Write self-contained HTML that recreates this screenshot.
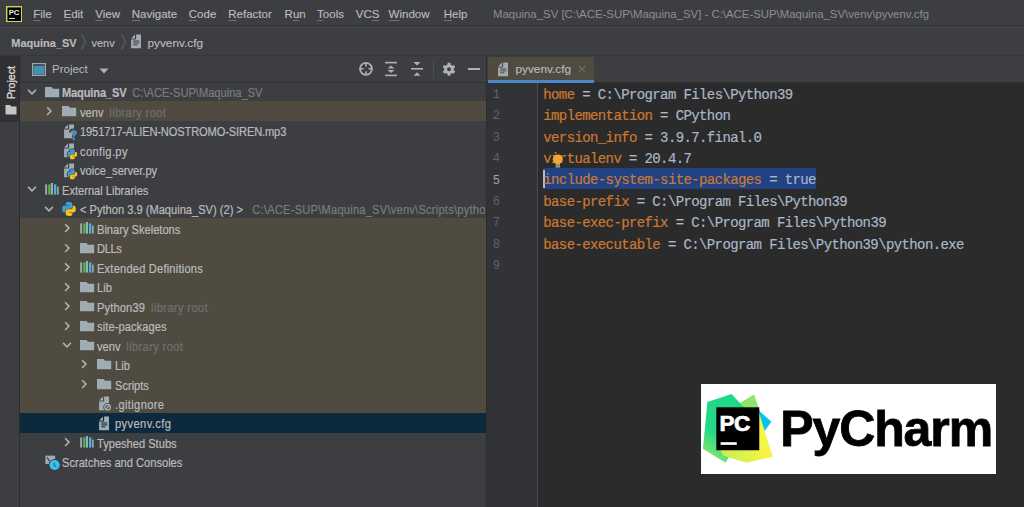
<!DOCTYPE html>
<html><head><meta charset="utf-8">
<style>
html,body{margin:0;padding:0;}
body{width:1024px;height:507px;overflow:hidden;position:relative;background:#3d3e42;font-family:"Liberation Sans",sans-serif;color:#bbbbbb;}
div,svg{position:absolute;}
.menubar{left:0;top:0;width:1024px;height:27px;background:#3d3e42;}
.mi{top:0;height:28px;line-height:28px;font-size:11.5px;color:#bbbbbb;white-space:nowrap;-webkit-text-stroke:0.15px currentColor;}
.title{left:493px;top:0;height:28px;line-height:28px;font-size:11.4px;color:#8e8e8e;white-space:nowrap;}
.hline{left:0;width:1024px;height:1px;}
.nav{left:0;top:28px;width:1024px;height:27px;background:#3d3e42;}
.navt{top:28.5px;height:28px;line-height:28px;font-size:11px;color:#bbbbbb;white-space:nowrap;-webkit-text-stroke:0.15px currentColor;}
.strip{left:0;top:56px;width:20px;height:451px;background:#3d3e42;}
.stripsel{left:0;top:56px;width:19px;height:66px;background:#2f3133;}
.panel{left:20px;top:56px;width:467px;height:451px;background:#3d3e42;overflow:hidden;}
.rowbg{left:0;width:467px;}
.tt{font-size:12px;line-height:19.48px;height:19.48px;white-space:nowrap;color:#bbbbbb;-webkit-text-stroke:0.2px currentColor;transform:scaleX(0.925);transform-origin:0 50%;}
.b{font-weight:bold;}
.gr{color:#7b7b7b;font-weight:normal;letter-spacing:0;margin-left:3.2px;}
.lr{margin-left:3px;letter-spacing:0.4px;color:#707070;}
.pp{margin-left:6.9px;letter-spacing:0.25px;}
.mi u{text-decoration:underline;text-decoration-thickness:1px;text-underline-offset:2px;text-decoration-color:#707070;}
.ico{overflow:visible;}
.editor{left:487px;top:56px;width:537px;height:451px;background:#2b2b2b;overflow:hidden;}
.gutter{left:0;top:26px;width:51px;height:430px;background:#323337;}
.ln{left:0;width:13px;text-align:right;font-family:"Liberation Mono",monospace;font-size:12px;line-height:21.4px;color:#606366;}
.cur{color:#a4a3a3;}
.cl{left:56.3px;font-family:"Liberation Mono",monospace;font-size:14px;letter-spacing:-0.614px;line-height:21.4px;color:#a9b7c6;white-space:pre;-webkit-text-stroke:0.2px currentColor;}
.k{color:#cc7832;}
</style></head><body>
<svg width="0" height="0" style="position:absolute">
<defs>
 <symbol id="chd" viewBox="0 0 10 10"><path d="M1.1 2.9 L5 6.8 L8.9 2.9" fill="none" stroke="#afb1b3" stroke-width="1.55"/></symbol>
 <symbol id="chr" viewBox="0 0 10 10"><path d="M3.1 1.2 L7 5.1 L3.1 9" fill="none" stroke="#afb1b3" stroke-width="1.55"/></symbol>
 <symbol id="i_folder" viewBox="0 0 16 16" overflow="visible"><path d="M1 3 H7.6 L9 4.7 H15.2 V13.3 H1 Z" fill="#a0abb3"/></symbol>
 <symbol id="i_unk" viewBox="0 0 16 16" overflow="visible"><path d="M8.1 1.4 H13 V15.3 H3.1 V6.5 H8.1 Z M3.1 5.5 L7 1.4 V5.5 Z" fill="#a0abb3"/>
   <path d="M9.9 9.4 C9.9 6.9 15.6 6.9 15.6 9.4 C15.6 11.3 12.8 11.4 12.8 13.9" fill="none" stroke="currentColor" stroke-width="4"/>
   <rect x="11" y="14.6" width="3.6" height="3.4" fill="currentColor"/>
   <path d="M10.7 9.5 C10.7 7.7 14.8 7.7 14.8 9.5 C14.8 11 12.8 11.3 12.8 13.6" fill="none" stroke="#3d9fd8" stroke-width="2"/>
   <rect x="11.8" y="15.1" width="2" height="2" fill="#3d9fd8"/></symbol>
 <symbol id="i_py" viewBox="0 0 16 16" overflow="visible"><path d="M8.1 1.4 H13 V15.3 H3.1 V6.5 H8.1 Z M3.1 5.5 L7 1.4 V5.5 Z" fill="#a0abb3"/>
   <g transform="translate(5.64 6.59) scale(0.713)"><path d="M7.9 1 C4.5 1 4.7 2.5 4.7 2.5 V4.1 H8 V4.6 H3.4 C3.4 4.6 1.2 4.3 1.2 7.9 C1.2 11.4 3.1 11.3 3.1 11.3 H4.3 V9.6 C4.3 9.6 4.2 7.7 6.2 7.7 H9.5 C9.5 7.7 11.3 7.7 11.3 5.9 V2.9 C11.3 2.9 11.6 1 7.9 1 Z" fill="currentColor" stroke="currentColor" stroke-width="2.2"/><path d="M8.1 15 C11.5 15 11.3 13.5 11.3 13.5 V11.9 H8 V11.4 H12.6 C12.6 11.4 14.8 11.7 14.8 8.1 C14.8 4.6 12.9 4.7 12.9 4.7 H11.7 V6.4 C11.7 6.4 11.8 8.3 9.8 8.3 H6.5 C6.5 8.3 4.7 8.3 4.7 10.1 V13.1 C4.7 13.1 4.4 15 8.1 15 Z" fill="currentColor" stroke="currentColor" stroke-width="2.2"/><path d="M7.9 1 C4.5 1 4.7 2.5 4.7 2.5 V4.1 H8 V4.6 H3.4 C3.4 4.6 1.2 4.3 1.2 7.9 C1.2 11.4 3.1 11.3 3.1 11.3 H4.3 V9.6 C4.3 9.6 4.2 7.7 6.2 7.7 H9.5 C9.5 7.7 11.3 7.7 11.3 5.9 V2.9 C11.3 2.9 11.6 1 7.9 1 Z" fill="#3d9fd8"/><path d="M8.1 15 C11.5 15 11.3 13.5 11.3 13.5 V11.9 H8 V11.4 H12.6 C12.6 11.4 14.8 11.7 14.8 8.1 C14.8 4.6 12.9 4.7 12.9 4.7 H11.7 V6.4 C11.7 6.4 11.8 8.3 9.8 8.3 H6.5 C6.5 8.3 4.7 8.3 4.7 10.1 V13.1 C4.7 13.1 4.4 15 8.1 15 Z" fill="#f7c31c"/></g></symbol>
 <symbol id="i_python" viewBox="0 0 16 16" overflow="visible"><path d="M7.9 1 C4.5 1 4.7 2.5 4.7 2.5 V4.1 H8 V4.6 H3.4 C3.4 4.6 1.2 4.3 1.2 7.9 C1.2 11.4 3.1 11.3 3.1 11.3 H4.3 V9.6 C4.3 9.6 4.2 7.7 6.2 7.7 H9.5 C9.5 7.7 11.3 7.7 11.3 5.9 V2.9 C11.3 2.9 11.6 1 7.9 1 Z" fill="#3d9fd8"/><path d="M8.1 15 C11.5 15 11.3 13.5 11.3 13.5 V11.9 H8 V11.4 H12.6 C12.6 11.4 14.8 11.7 14.8 8.1 C14.8 4.6 12.9 4.7 12.9 4.7 H11.7 V6.4 C11.7 6.4 11.8 8.3 9.8 8.3 H6.5 C6.5 8.3 4.7 8.3 4.7 10.1 V13.1 C4.7 13.1 4.4 15 8.1 15 Z" fill="#f7c31c"/></symbol>
 <symbol id="i_lib" viewBox="0 0 16 16" overflow="visible">
   <rect x="1.2" y="3.4" width="1.9" height="10.2" fill="#a0abb3"/><rect x="4.3" y="3.4" width="2.1" height="10.2" fill="#4cc04a"/>
   <rect x="6.9" y="2" width="2.1" height="11.6" fill="#a0abb3"/><rect x="10" y="3.4" width="2.3" height="10.2" fill="#40b6e0"/>
   <rect x="13.1" y="5.6" width="1.6" height="8" fill="#a0abb3"/></symbol>
 <symbol id="i_git" viewBox="0 0 16 16" overflow="visible"><path d="M8.1 1.4 H13 V15.3 H3.1 V6.5 H8.1 Z M3.1 5.5 L7 1.4 V5.5 Z" fill="#a0abb3"/>
   <circle cx="11.6" cy="12.3" r="4.3" fill="currentColor"/><circle cx="11.6" cy="12.3" r="2.8" fill="none" stroke="#a0abb3" stroke-width="1.3"/><path d="M9.8 14.1 L13.4 10.5" stroke="#a0abb3" stroke-width="1.3"/></symbol>
 <symbol id="i_cfg" viewBox="0 0 16 16" overflow="visible"><path d="M8.1 1.4 H13 V15.3 H3.1 V6.5 H8.1 Z M3.1 5.5 L7 1.4 V5.5 Z" fill="#a0abb3"/>
   <rect x="5.2" y="7.5" width="6.2" height="1" fill="currentColor"/><rect x="5.2" y="9.4" width="6.2" height="1" fill="currentColor"/><rect x="5.2" y="11.3" width="4.2" height="1" fill="currentColor"/></symbol>
 <symbol id="i_scratch" viewBox="0 0 16 16" overflow="visible"><rect x="1.4" y="1.6" width="9.7" height="8.5" fill="#a0abb3"/><path d="M3 3.2 L5.5 7.2" stroke="#3c3f41" stroke-width="1.2"/>
   <circle cx="10.6" cy="11" r="6" fill="#3c3f41"/><circle cx="10.6" cy="11" r="5.1" fill="#3cc0ee"/><path d="M10.2 8.4 V11.4 L12.3 12.9" fill="none" stroke="#2a5f80" stroke-width="1.1"/></symbol>
</defs></svg>

<!-- menubar -->
<div class="menubar"></div>
<svg style="left:5.6px;top:5.6px" width="16.4" height="16.4" viewBox="0 0 16 16">
  <rect x="0.7" y="0.7" width="14.6" height="14.6" fill="#000" stroke="#cfd54a" stroke-width="1.4"/>
  <text x="2.6" y="9.1" font-family="Liberation Sans" font-weight="bold" font-size="7.8" fill="#e8e8e8" letter-spacing="-0.3">PC</text>
  <rect x="3" y="11.6" width="5.8" height="1.1" fill="#cfcfcf"/>
</svg>
<div class="mi" style="left:33.2px"><u>F</u>ile</div>
<div class="mi" style="left:63.5px"><u>E</u>dit</div>
<div class="mi" style="left:95.3px"><u>V</u>iew</div>
<div class="mi" style="left:131.8px"><u>N</u>avigate</div>
<div class="mi" style="left:188.8px"><u>C</u>ode</div>
<div class="mi" style="left:228.3px"><u>R</u>efactor</div>
<div class="mi" style="left:284.6px">R<u>u</u>n</div>
<div class="mi" style="left:317.1px"><u>T</u>ools</div>
<div class="mi" style="left:355.8px">VC<u>S</u></div>
<div class="mi" style="left:388.6px"><u>W</u>indow</div>
<div class="mi" style="left:443.7px"><u>H</u>elp</div>
<div class="title">Maquina_SV [C:\ACE-SUP\Maquina_SV] - C:\ACE-SUP\Maquina_SV\venv\pyvenv.cfg</div>
<div class="hline" style="top:25.2px;height:1.4px;background:#38393c"></div><div class="hline" style="top:27px;height:1.7px;background:#47494c"></div>

<!-- nav bar -->
<div class="nav"></div>
<div class="navt b" style="left:11.3px">Maquina_SV</div>
<svg style="left:79.5px;top:33px" width="8" height="20"><path d="M1.6 1.5 L5.4 9 L1.6 16.5" fill="none" stroke="#515356" stroke-width="2"/></svg>
<div class="navt" style="left:91.4px">venv</div>
<svg style="left:119.5px;top:33px" width="8" height="20"><path d="M1.6 1.5 L5.4 9 L1.6 16.5" fill="none" stroke="#515356" stroke-width="2"/></svg>
<svg style="left:128px;top:33.2px;color:#3d3e42" width="16" height="16"><use href="#i_cfg"/></svg>
<div class="navt" style="left:147.5px;font-size:11.8px">pyvenv.cfg</div>
<div class="hline" style="top:55px;background:#36373a"></div>

<!-- left strip -->
<div class="strip"></div>
<div class="stripsel"></div>
<div style="left:19px;top:56px;width:1px;height:451px;background:#2b2b2b"></div>
<div style="left:-5.2px;top:76.5px;width:32px;height:12px;line-height:12px;font-size:10.6px;color:#d8d8d8;-webkit-text-stroke:0.3px #d8d8d8;transform:rotate(-90deg);white-space:nowrap;text-align:center">Project</div>
<svg style="left:4.5px;top:104px" width="12" height="11" viewBox="0 0 12 11"><path d="M0.5 1 H5 L6.2 2.4 H11.5 V10.5 H0.5 Z" fill="#c5c5c5"/></svg>

<!-- project panel -->
<div class="panel">
<div class="rowbg" style="top:45.48px;height:19.48px;background:#4f4b41"></div>
<div class="rowbg" style="top:162.36px;height:19.48px;background:#4f4b41"></div>
<div class="rowbg" style="top:181.84px;height:19.48px;background:#4f4b41"></div>
<div class="rowbg" style="top:201.32px;height:19.48px;background:#4f4b41"></div>
<div class="rowbg" style="top:220.80px;height:19.48px;background:#4f4b41"></div>
<div class="rowbg" style="top:240.28px;height:19.48px;background:#4f4b41"></div>
<div class="rowbg" style="top:259.76px;height:19.48px;background:#4f4b41"></div>
<div class="rowbg" style="top:279.24px;height:19.48px;background:#4f4b41"></div>
<div class="rowbg" style="top:298.72px;height:19.48px;background:#4f4b41"></div>
<div class="rowbg" style="top:318.20px;height:19.48px;background:#4f4b41"></div>
<div class="rowbg" style="top:337.68px;height:19.48px;background:#4f4b41"></div>
<div class="rowbg" style="top:357.16px;height:19.48px;background:#0d293e"></div>
<svg class="ico" style="left:6.50px;top:30.74px" width="10" height="10"><use href="#chd"/></svg>
<svg class="ico" style="left:23.50px;top:27.74px;color:#3d3e42" width="16" height="16"><use href="#i_folder"/></svg>
<div class="tt b" style="left:42.40px;top:28.30px;letter-spacing:-0.17px">Maquina_SV <span class="gr">C:\ACE-SUP\Maquina_SV</span></div>
<svg class="ico" style="left:24.00px;top:50.22px" width="10" height="10"><use href="#chr"/></svg>
<svg class="ico" style="left:41.00px;top:47.22px;color:#4f4b41" width="16" height="16"><use href="#i_folder"/></svg>
<div class="tt" style="left:59.90px;top:47.78px">venv <span class="gr lr">library root</span></div>
<svg class="ico" style="left:41.00px;top:66.70px;color:#3d3e42" width="16" height="16"><use href="#i_unk"/></svg>
<div class="tt" style="left:59.90px;top:67.26px;letter-spacing:-0.14px">1951717-ALIEN-NOSTROMO-SIREN.mp3</div>
<svg class="ico" style="left:41.00px;top:86.18px;color:#3d3e42" width="16" height="16"><use href="#i_py"/></svg>
<div class="tt" style="left:59.90px;top:86.74px;letter-spacing:0.41px">config.py</div>
<svg class="ico" style="left:41.00px;top:105.66px;color:#3d3e42" width="16" height="16"><use href="#i_py"/></svg>
<div class="tt" style="left:59.90px;top:106.22px">voice_server.py</div>
<svg class="ico" style="left:6.50px;top:128.14px" width="10" height="10"><use href="#chd"/></svg>
<svg class="ico" style="left:23.50px;top:125.14px;color:#3d3e42" width="16" height="16"><use href="#i_lib"/></svg>
<div class="tt" style="left:42.40px;top:125.70px">External Libraries</div>
<svg class="ico" style="left:24.00px;top:147.62px" width="10" height="10"><use href="#chd"/></svg>
<svg class="ico" style="left:41.00px;top:144.62px;color:#3d3e42" width="16" height="16"><use href="#i_python"/></svg>
<div class="tt" style="left:59.90px;top:145.18px">&lt; Python 3.9 (Maquina_SV) (2) &gt; <span class="gr pp">C:\ACE-SUP\Maquina_SV\venv\Scripts\python.exe</span></div>
<svg class="ico" style="left:41.50px;top:167.10px" width="10" height="10"><use href="#chr"/></svg>
<svg class="ico" style="left:58.50px;top:164.10px;color:#4f4b41" width="16" height="16"><use href="#i_lib"/></svg>
<div class="tt" style="left:77.40px;top:164.66px">Binary Skeletons</div>
<svg class="ico" style="left:41.50px;top:186.58px" width="10" height="10"><use href="#chr"/></svg>
<svg class="ico" style="left:58.50px;top:183.58px;color:#4f4b41" width="16" height="16"><use href="#i_folder"/></svg>
<div class="tt" style="left:77.40px;top:184.14px;letter-spacing:-0.4px">DLLs</div>
<svg class="ico" style="left:41.50px;top:206.06px" width="10" height="10"><use href="#chr"/></svg>
<svg class="ico" style="left:58.50px;top:203.06px;color:#4f4b41" width="16" height="16"><use href="#i_lib"/></svg>
<div class="tt" style="left:77.40px;top:203.62px;letter-spacing:0.22px">Extended Definitions</div>
<svg class="ico" style="left:41.50px;top:225.54px" width="10" height="10"><use href="#chr"/></svg>
<svg class="ico" style="left:58.50px;top:222.54px;color:#4f4b41" width="16" height="16"><use href="#i_folder"/></svg>
<div class="tt" style="left:77.40px;top:223.10px">Lib</div>
<svg class="ico" style="left:41.50px;top:245.02px" width="10" height="10"><use href="#chr"/></svg>
<svg class="ico" style="left:58.50px;top:242.02px;color:#4f4b41" width="16" height="16"><use href="#i_folder"/></svg>
<div class="tt" style="left:77.40px;top:242.58px;letter-spacing:0.16px">Python39 <span class="gr lr">library root</span></div>
<svg class="ico" style="left:41.50px;top:264.50px" width="10" height="10"><use href="#chr"/></svg>
<svg class="ico" style="left:58.50px;top:261.50px;color:#4f4b41" width="16" height="16"><use href="#i_folder"/></svg>
<div class="tt" style="left:77.40px;top:262.06px;letter-spacing:0.1px">site-packages</div>
<svg class="ico" style="left:41.50px;top:283.98px" width="10" height="10"><use href="#chd"/></svg>
<svg class="ico" style="left:58.50px;top:280.98px;color:#4f4b41" width="16" height="16"><use href="#i_folder"/></svg>
<div class="tt" style="left:77.40px;top:281.54px">venv <span class="gr lr">library root</span></div>
<svg class="ico" style="left:59.00px;top:303.46px" width="10" height="10"><use href="#chr"/></svg>
<svg class="ico" style="left:76.00px;top:300.46px;color:#4f4b41" width="16" height="16"><use href="#i_folder"/></svg>
<div class="tt" style="left:94.90px;top:301.02px">Lib</div>
<svg class="ico" style="left:59.00px;top:322.94px" width="10" height="10"><use href="#chr"/></svg>
<svg class="ico" style="left:76.00px;top:319.94px;color:#4f4b41" width="16" height="16"><use href="#i_folder"/></svg>
<div class="tt" style="left:94.90px;top:320.50px">Scripts</div>
<svg class="ico" style="left:76.00px;top:339.42px;color:#4f4b41" width="16" height="16"><use href="#i_git"/></svg>
<div class="tt" style="left:94.90px;top:339.98px;letter-spacing:0.4px">.gitignore</div>
<svg class="ico" style="left:76.00px;top:358.90px;color:#0d293e" width="16" height="16"><use href="#i_cfg"/></svg>
<div class="tt" style="left:94.90px;top:359.46px;letter-spacing:0.45px">pyvenv.cfg</div>
<svg class="ico" style="left:41.50px;top:381.38px" width="10" height="10"><use href="#chr"/></svg>
<svg class="ico" style="left:58.50px;top:378.38px;color:#3d3e42" width="16" height="16"><use href="#i_lib"/></svg>
<div class="tt" style="left:77.40px;top:378.94px">Typeshed Stubs</div>
<svg class="ico" style="left:23.50px;top:397.86px;color:#3d3e42" width="16" height="16"><use href="#i_scratch"/></svg>
<div class="tt" style="left:42.40px;top:398.42px">Scratches and Consoles</div>
</div>

<!-- project toolbar -->
<div style="left:20px;top:56px;width:467px;height:26px;background:#3d3e42"></div>
<div class="hline" style="left:20px;width:467px;top:81.5px;background:#323232"></div>
<svg style="left:32px;top:62.5px" width="14" height="13" viewBox="0 0 14 13"><rect x="0.6" y="0.6" width="12.8" height="11.8" fill="none" stroke="#9aa7b0" stroke-width="1.2"/><rect x="1.5" y="2.8" width="11" height="8.8" fill="#4490b2"/></svg>
<div style="left:52px;top:56px;height:26px;line-height:26px;font-size:11.5px;color:#bbbbbb">Project</div>
<svg style="left:99.2px;top:67.8px" width="10" height="6"><path d="M0.5 0.5 H9.5 L5 5.5 Z" fill="#afb1b3"/></svg>
<svg style="left:358px;top:61px" width="16" height="16" viewBox="0 0 16 16"><circle cx="8" cy="7.8" r="6" fill="none" stroke="#afb1b3" stroke-width="1.8"/><path d="M8 2 V5.4 M8 10.2 V13.6 M2.2 7.8 H5.6 M10.4 7.8 H13.8" stroke="#afb1b3" stroke-width="1.6"/></svg>
<svg style="left:383px;top:61px" width="16" height="16" viewBox="0 0 16 16"><rect x="2" y="0.8" width="12" height="1.6" fill="#afb1b3"/><rect x="2" y="13.6" width="12" height="1.6" fill="#afb1b3"/><path d="M4.6 7.4 L8 4.4 L11.4 7.4 Z M4.6 9 L8 12 L11.4 9 Z" fill="#afb1b3"/></svg>
<svg style="left:408.5px;top:61px" width="16" height="16" viewBox="0 0 16 16"><rect x="2" y="7" width="12" height="1.6" fill="#afb1b3"/><path d="M4.5 1 L8 4.6 L11.5 1 Z M4.5 14.8 L8 11.2 L11.5 14.8 Z" fill="#afb1b3"/></svg>
<div style="left:432.5px;top:59px;width:1px;height:20px;background:#4a4d4f"></div>
<svg style="left:440.5px;top:60.5px" width="16" height="16" viewBox="0 0 16 16"><path d="M5.55 4.06 L6.57 3.61 L6.63 1.84 L9.37 1.84 L9.43 3.61 L10.45 4.06 L11.34 4.72 L12.90 3.88 L14.28 6.26 L12.77 7.20 L12.90 8.30 L12.77 9.40 L14.28 10.34 L12.90 12.72 L11.34 11.88 L10.45 12.54 L9.43 12.99 L9.37 14.76 L6.63 14.76 L6.57 12.99 L5.55 12.54 L4.66 11.88 L3.10 12.72 L1.72 10.34 L3.23 9.40 L3.10 8.30 L3.23 7.20 L1.72 6.26 L3.10 3.88 L4.66 4.72 Z" fill="#afb1b3"/><circle cx="8" cy="8.3" r="2" fill="#3d3e42"/></svg>
<div style="left:467.5px;top:67.8px;width:12.5px;height:2px;background:#afb1b3"></div>

<!-- editor -->
<div class="editor">
 <div class="gutter"></div>
 <div style="left:50.2px;top:26px;width:1px;height:430px;background:#4a4b4e"></div>
 <div style="left:56.2px;top:112.2px;width:272.5px;height:21.2px;background:#214283"></div>
 <div style="left:56.3px;top:114px;width:1.5px;height:18px;background:#bbbbbb"></div>
 <div class="ln" style="top:29.00px">1</div>
<div class="cl" style="top:28.80px"><span class="k">home</span> = C:\Program Files\Python39</div>
<div class="ln" style="top:50.40px">2</div>
<div class="cl" style="top:50.20px"><span class="k">implementation</span> = CPython</div>
<div class="ln" style="top:71.80px">3</div>
<div class="cl" style="top:71.60px"><span class="k">version_info</span> = 3.9.7.final.0</div>
<div class="ln" style="top:93.20px">4</div>
<div class="cl" style="top:93.00px"><span class="k">virtualenv</span> = 20.4.7</div>
<div class="ln cur" style="top:114.60px">5</div>
<div class="cl" style="top:114.40px"><span class="k">include-system-site-packages</span> = true</div>
<div class="ln" style="top:136.00px">6</div>
<div class="cl" style="top:135.80px"><span class="k">base-prefix</span> = C:\Program Files\Python39</div>
<div class="ln" style="top:157.40px">7</div>
<div class="cl" style="top:157.20px"><span class="k">base-exec-prefix</span> = C:\Program Files\Python39</div>
<div class="ln" style="top:178.80px">8</div>
<div class="cl" style="top:178.60px"><span class="k">base-executable</span> = C:\Program Files\Python39\python.exe</div>
<div class="ln" style="top:200.20px">9</div>
 <svg style="left:64.5px;top:97.6px" width="12" height="15" viewBox="0 0 12 15"><rect x="3.6" y="8.5" width="4.4" height="5.2" fill="#8d8d8d"/><circle cx="5.7" cy="5.3" r="4.9" fill="#f0a732"/></svg>
</div>
<!-- editor tabs -->
<div style="left:487px;top:56px;width:537px;height:26px;background:#3d3e42"></div>
<div style="left:488px;top:56.5px;width:106px;height:24px;background:#4f4b41"></div>
<div style="left:488px;top:79.8px;width:106px;height:3px;background:#4a88c7"></div>
<div class="hline" style="left:594px;width:430px;top:82px;background:#323232"></div>
<div style="left:486px;top:56px;width:1px;height:451px;background:#2b2b2b"></div>
<svg style="left:495.2px;top:60.6px;color:#4f4b41" width="16" height="16"><use href="#i_cfg"/></svg>
<div style="left:515.5px;top:57.2px;height:24px;line-height:24px;font-size:11.8px;color:#bbbbbb;-webkit-text-stroke:0.15px #bbbbbb">pyvenv.cfg</div>
<svg style="left:578.1px;top:64.8px" width="8" height="8"><path d="M0.8 0.8 L7.2 7.2 M7.2 0.8 L0.8 7.2" stroke="#6e6e6e" stroke-width="1.1"/></svg>

<!-- logo -->
<div style="left:701px;top:384px;width:295px;height:90px;background:#ffffff"></div>
<svg style="left:701.7px;top:392.7px" width="71.6" height="71.6" viewBox="0 0 70 70">
 <defs>
  <linearGradient id="lg1" x1="0" y1="60" x2="40" y2="0" gradientUnits="userSpaceOnUse"><stop offset="0" stop-color="#8ce66a"/><stop offset="0.35" stop-color="#21d789"/><stop offset="1" stop-color="#21d789"/></linearGradient>
  <linearGradient id="lg2" x1="20" y1="60" x2="60" y2="20" gradientUnits="userSpaceOnUse"><stop offset="0" stop-color="#c8ef55"/><stop offset="0.5" stop-color="#f5f445"/><stop offset="1" stop-color="#fcf84a"/></linearGradient>
 </defs>
 <polygon points="50.9,1.4 30,14 57,19" fill="#8fe36b"/>
 <polygon points="52,14 67.8,28 60.3,38.7 45,34" fill="#07c3f2"/>
 <polygon points="28.8,1 5.3,8.8 0.9,54.4 23,68.2 40,40 45,18" fill="url(#lg1)"/>
 <polygon points="56,20 69.2,62.4 43.6,68.2 21,61.4 14,50 30,40" fill="url(#lg2)"/>
 <rect x="14" y="14" width="42" height="42" fill="#000"/>
 <text x="17" y="36.8" font-family="Liberation Sans" font-weight="bold" font-size="22" fill="#fff" stroke="#fff" stroke-width="0.7" letter-spacing="-0.3">PC</text>
 <rect x="18.2" y="48.1" width="15.8" height="2.6" fill="#fff"/>
</svg>
<div style="left:780.2px;top:383.6px;height:90px;line-height:90px;font-size:50px;font-weight:bold;color:#000;letter-spacing:-1.1px;white-space:nowrap;-webkit-text-stroke:0.8px #000">PyCharm</div>
</body></html>
